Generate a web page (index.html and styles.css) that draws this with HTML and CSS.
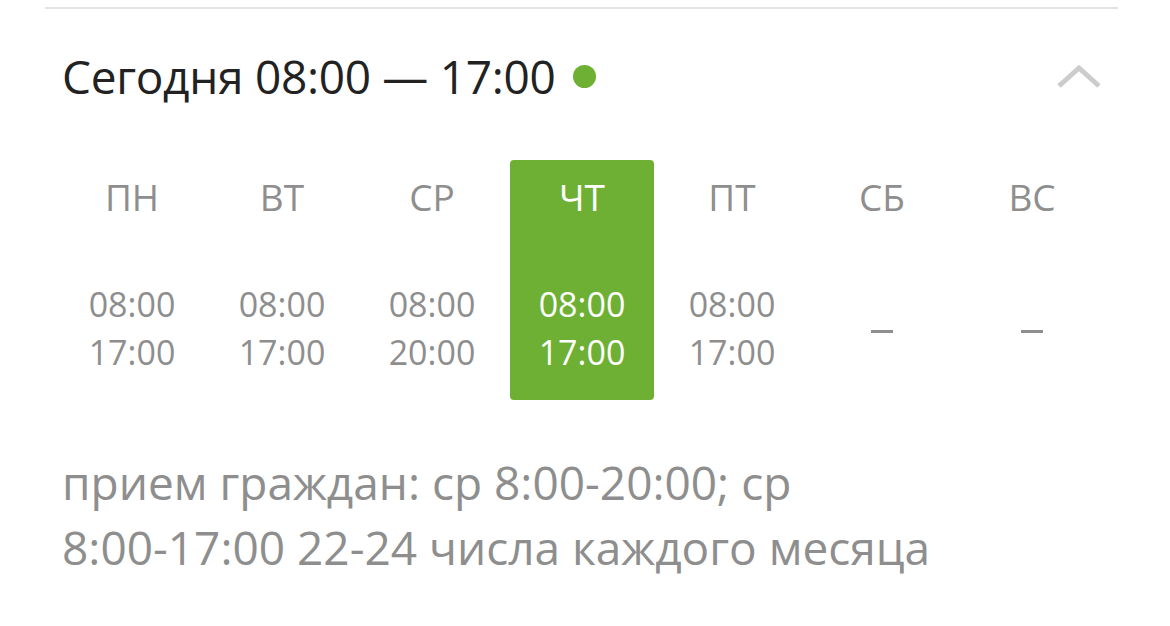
FILE: index.html
```html
<!DOCTYPE html>
<html lang="ru">
<head>
<meta charset="utf-8">
<link rel="stylesheet" href="styles.css">
</head>
<body>
<div class="card">
  <div class="divider"></div>
  <div class="header">
    <div class="title">Сегодня 08:00 — 17:00<span class="dot"></span></div>
    <svg class="chevron" width="46" height="26" viewBox="0 0 46 26"><path d="M3 23 L23 5 L43 23" fill="none" stroke="#cccccc" stroke-width="5"/></svg>
  </div>
  <div class="week">
    <div class="day"><div class="dname">ПН</div><div class="hours">08:00<br>17:00</div></div>
    <div class="day"><div class="dname">ВТ</div><div class="hours">08:00<br>17:00</div></div>
    <div class="day"><div class="dname">СР</div><div class="hours">08:00<br>20:00</div></div>
    <div class="day today"><div class="dname">ЧТ</div><div class="hours">08:00<br>17:00</div></div>
    <div class="day"><div class="dname">ПТ</div><div class="hours">08:00<br>17:00</div></div>
    <div class="day"><div class="dname">СБ</div><div class="hours"><span class="dash"></span></div></div>
    <div class="day"><div class="dname">ВС</div><div class="hours"><span class="dash"></span></div></div>
  </div>
  <p class="note">прием граждан: ср 8:00-20:00; ср<br>8:00-17:00 22-24 числа каждого месяца</p>
</div>
</body>
</html>
```
FILE: styles.css
```css
html, body {
  margin: 0;
  padding: 0;
  background: #ffffff;
}
body {
  font-family: "Open Sans", "DejaVu Sans", sans-serif;
  width: 1170px;
  height: 626px;
  overflow: hidden;
}
.card {
  padding: 7px 52px 0 45px;
}
.divider {
  height: 2px;
  background: #e3e3e3;
}
.header {
  display: flex;
  align-items: center;
  justify-content: space-between;
  padding: 42px 15px 0 17px;
  height: 50px;
}
.title {
  font-size: 46px;
  color: #222222;
  display: flex;
  align-items: center;
  letter-spacing: -0.3px;
}
.dot {
  display: inline-block;
  width: 23px;
  height: 23px;
  border-radius: 50%;
  background: #6db033;
  margin-left: 18px;
}
.chevron {
  margin-right: 1px;
}
.week {
  display: grid;
  grid-template-columns: repeat(7, 150px);
  margin: 59px 0 0 12px;
}
.day {
  margin: 0 3px;
  height: 240px;
  border-radius: 4px;
  display: flex;
  flex-direction: column;
  align-items: center;
  color: #8e8e8e;
}
.day.today {
  background: #6db033;
  color: #ffffff;
}
.dname {
  font-size: 37px;
  line-height: 40px;
  margin-top: 17px;
}
.hours {
  font-size: 34px;
  line-height: 48px;
  margin-top: 63px;
  text-align: center;
  height: 96px;
  display: flex;
  align-items: center;
  justify-content: center;
}
.dash {
  display: block;
  width: 22px;
  height: 3px;
  margin-top: 6px;
  background: #8e8e8e;
}
.note {
  margin: 50px 0 0 17px;
  font-size: 46px;
  line-height: 65px;
  color: #8e8e8e;
  white-space: nowrap;
}
```
